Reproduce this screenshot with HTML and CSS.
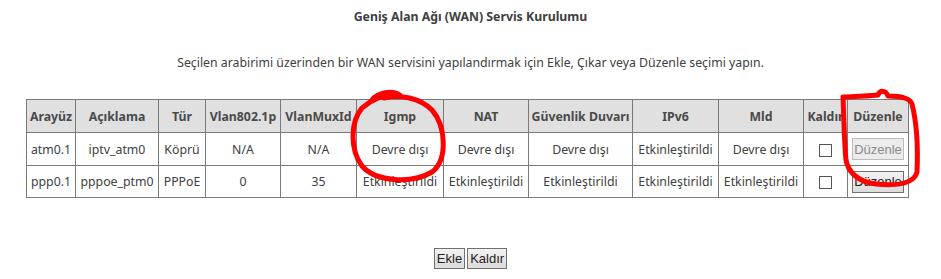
FILE: index.html
```html
<!DOCTYPE html>
<html lang="tr">
<head>
    <meta charset="UTF-8">
    <title>WAN Servis Kurulumu</title>
    <link rel="stylesheet" href="styles.css">
</head>
<body>
    <div class="page">
        <h1 class="title">Geniş Alan Ağı (WAN) Servis Kurulumu</h1>
        <p class="intro">Seçilen arabirimi üzerinden bir WAN servisini yapılandırmak için Ekle, Çıkar veya Düzenle seçimi yapın.</p>

        <table class="wan-table">
            <colgroup>
                <col style="width:49px">
                <col style="width:83px">
                <col style="width:47px">
                <col style="width:75px">
                <col style="width:76px">
                <col style="width:87px">
                <col style="width:85px">
                <col style="width:104px">
                <col style="width:86px">
                <col style="width:85px">
                <col style="width:44px">
                <col style="width:61px">
            </colgroup>
            <tr class="head">
                <th>Arayüz</th>
                <th>Açıklama</th>
                <th>Tür</th>
                <th>Vlan802.1p</th>
                <th>VlanMuxId</th>
                <th>Igmp</th>
                <th>NAT</th>
                <th>Güvenlik Duvarı</th>
                <th>IPv6</th>
                <th>Mld</th>
                <th>Kaldır</th>
                <th>Düzenle</th>
            </tr>
            <tr class="row1">
                <td>atm0.1</td>
                <td>iptv_atm0</td>
                <td>Köprü</td>
                <td>N/A</td>
                <td>N/A</td>
                <td>Devre dışı</td>
                <td>Devre dışı</td>
                <td>Devre dışı</td>
                <td>Etkinleştirildi</td>
                <td>Devre dışı</td>
                <td><span class="check"></span></td>
                <td><button class="btn btn-off">Düzenle</button></td>
            </tr>
            <tr class="row2">
                <td>ppp0.1</td>
                <td>pppoe_ptm0</td>
                <td>PPPoE</td>
                <td>0</td>
                <td>35</td>
                <td>Etkinleştirildi</td>
                <td>Etkinleştirildi</td>
                <td>Etkinleştirildi</td>
                <td>Etkinleştirildi</td>
                <td>Etkinleştirildi</td>
                <td><span class="check"></span></td>
                <td><button class="btn">Düzenle</button></td>
            </tr>
        </table>

        <div class="actions">
            <button class="btn">Ekle</button>
            <button class="btn">Kaldır</button>
        </div>

        <!-- el ile çizilmiş kırmızı işaretler -->
        <svg class="marks" width="941" height="279" viewBox="0 0 941 279">
            <path d="M372 100 C378 92 392 90 400 95 C384 93 372 99 362 108 C350 122 350 150 362 166 C376 182 412 184 432 172 C448 160 446 126 432 110 C420 98 400 94 384 98"/>
            <path d="M843 97 C860 96 872 96 878 95 C880 90 886 90 888 96 C900 96 910 98 912 104 C917 124 918 150 917 172 C914 184 896 186 876 184 C858 182 848 172 846 160 C844 140 844 118 843 97"/>
        </svg>
    </div>
</body>
</html>
```

FILE: styles.css
```css
/* Genel */
body {
    margin: 0;
    font-family: "Noto Sans", "Open Sans", sans-serif;
    font-size: 12.3px;
    color: #404040;
    background-color: #fff;
}

.page {
    position: relative;
    width: 941px;
    height: 279px;
}

.title {
    margin: 0;
    padding-top: 8px;
    font-size: 12.3px;
    font-weight: bold;
    text-align: center;
    line-height: 18px;
    color: #404040;
}

.intro {
    margin: 28px 0 0 0;
    text-align: center;
    line-height: 18px;
}

/* Tablo */
.wan-table {
    margin: 27px 0 0 26px;
    width: 882px;
    table-layout: fixed;
    border-collapse: collapse;
}

.wan-table th,
.wan-table td {
    border: 1px solid #7a7a7a;
    text-align: center;
    padding: 0;
    white-space: nowrap;
    overflow: hidden;
}

.wan-table th {
    background-color: #e0e0e0;
    font-weight: bold;
    height: 32px;
    color: #4a4a4a;
}

.row1 td {
    height: 32px;
}

.row2 td {
    height: 31px;
}

.check {
    display: inline-block;
    width: 11px;
    height: 11px;
    border: 1px solid #555;
    background: #fff;
    vertical-align: middle;
}

/* Butonlar */
.btn {
    font-family: "Liberation Sans", Arial, sans-serif;
    font-size: 13px;
    color: #222;
    padding: 0 2px;
    height: 21px;
    border: 1px solid #707070;
    background: linear-gradient(#f2f2f2, #dcdcdc);
    border-radius: 0;
}

.wan-table .btn {
    width: 52px;
    height: 22px;
    padding: 0;
}

.btn-off {
    color: #8a8a8a;
    border-color: #bdbdbd;
    background: #ececec;
}

.actions {
    display: flex;
    justify-content: center;
    gap: 2px;
    margin-top: 50px;
}

/* Kırmızı işaretler */
.marks {
    position: absolute;
    top: 0;
    left: 0;
    pointer-events: none;
}

.marks path {
    fill: none;
    stroke: #ff0000;
    stroke-width: 5;
    stroke-linecap: round;
    stroke-linejoin: round;
}
```
